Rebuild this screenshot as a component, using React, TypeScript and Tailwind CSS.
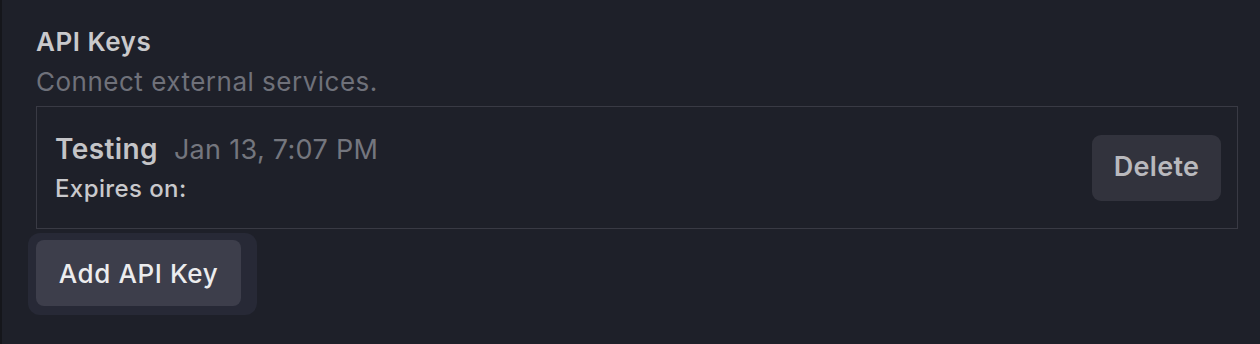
export default function App() {
  return (
    <div
      className="flex h-[344px] w-[1260px] bg-[#1e2029]"
      style={{ fontFamily: "Inter, 'Noto Sans', sans-serif" }}
    >
      <div className="w-[2px] shrink-0 bg-[#15161b]" />
      <div className="flex-1 pl-[34px] pr-[22px] pt-[26px]">
        <div className="text-[26px] font-semibold leading-[32px] tracking-[0.5px] text-[#c9c9cc]">API Keys</div>
        <div className="mt-[8px] text-[26px] leading-[32px] tracking-[0.5px] text-[#6f717a]">
          Connect external services.
        </div>

        <div className="mt-[8px] flex h-[123px] items-center justify-between border border-[#393a44] pl-[18px] pr-[16px]">
          <div className="flex flex-col">
            <div className="-mt-[2px] flex items-baseline gap-[16px]">
              <span className="text-[28px] font-semibold leading-[36px] tracking-[0.4px] text-[#c4c4c7]">Testing</span>
              <span className="text-[27px] leading-[36px] tracking-[0.3px] text-[#74767e]">Jan 13, 7:07 PM</span>
            </div>
            <div className="mt-[7px] text-[24px] font-medium leading-[28px] tracking-[0.4px] text-[#c9c9cc]">Expires on:</div>
          </div>
          <button className="flex h-[66px] w-[129px] items-center justify-center rounded-[9px] bg-[#32333d] text-[27px] font-semibold tracking-[0.3px] text-[#b9b9bd]">
            Delete
          </button>
        </div>

        <div className="-ml-[8px] mt-[4px] inline-flex rounded-[12px] bg-[#272936] pb-[9px] pl-[8px] pr-[16px] pt-[7px]">
          <button className="flex h-[66px] w-[205px] items-center justify-center rounded-[8px] bg-[#3d3e4b] text-[26px] font-medium tracking-[0.6px] text-[#ececee]">
            Add API Key
          </button>
        </div>
      </div>
    </div>
  );
}
